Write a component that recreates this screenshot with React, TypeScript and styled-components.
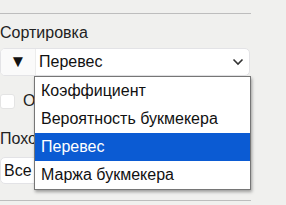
import styled, { createGlobalStyle } from "styled-components"

const GlobalStyle = createGlobalStyle`
    html, body {
        margin: 0;
        padding: 0;
        background-color: #f0f0ee;
        font-family: "Liberation Sans", Arial, sans-serif;
        overflow: hidden;
    }
`

const Panel = styled.div`
    position: relative;
    width: 251px;
    display: flex;
    flex-direction: column;
`

const Divider = styled.div<{ $top: number }>`
    height: 1px;
    margin-top: ${p => p.$top}px;
    background-color: #bdbdbd;
`

const Label = styled.div<{ $top: number }>`
    margin-top: ${p => p.$top}px;
    font-size: 16px;
    line-height: 18px;
    color: #222222;
    white-space: nowrap;
`

const SelectRow = styled.div`
    display: flex;
    height: 26px;
    margin-top: 6px;
    margin-right: 1px;
    border: 1px solid #e3e3e6;
    border-radius: 5px;
    background-color: #ffffff;
    overflow: hidden;
`

const OrderButton = styled.div`
    display: flex;
    justify-content: center;
    align-items: center;
    width: 34px;
    background-color: #fafafa;
    border-right: 1px solid #ececec;
    font-size: 17px;
    color: #111111;
`

const SelectBox = styled.div`
    display: flex;
    align-items: center;
    justify-content: space-between;
    flex: 1;
    padding: 0 5px 0 3px;
    font-size: 16px;
    color: #111111;
`

const SmallSelect = styled.div`
    display: flex;
    align-items: center;
    width: 60px;
    height: 25px;
    margin-top: 9px;
    padding-left: 3px;
    border: 1px solid #e3e3e6;
    border-radius: 5px;
    background-color: #ffffff;
    font-size: 16px;
    color: #111111;
`

const CheckRow = styled.div`
    display: flex;
    align-items: center;
    gap: 8px;
    margin-top: 16px;
    font-size: 16px;
    color: #222222;
    white-space: nowrap;
`

const CheckBox = styled.div`
    width: 13px;
    height: 13px;
    border: 1px solid #e4e4e4;
    border-radius: 3px;
    background-color: #ffffff;
`

const BlueButton = styled.div`
    height: 20px;
    margin-top: 9px;
    margin-right: 4px;
    border-radius: 4px;
    background-color: #243a7c;
`

const ListBox = styled.div`
    position: absolute;
    left: 34px;
    top: 76px;
    width: 215px;
    border: 1px solid #767676;
    background-color: #ffffff;
    box-shadow: 1px 2px 3px rgba(0, 0, 0, 0.35);
`

const Option = styled.div<{ $selected?: boolean }>`
    height: 28px;
    display: flex;
    align-items: center;
    padding-left: 6px;
    font-size: 16px;
    color: ${p => (p.$selected ? "#ffffff" : "#111111")};
    background-color: ${p => (p.$selected ? "#0b5bd3" : "transparent")};
    white-space: nowrap;
`

function Chevron() {
    return (
        <svg width="12" height="8" viewBox="0 0 12 8">
            <path d="M1.5 1.5 L6 6 L10.5 1.5" fill="none" stroke="#333" strokeWidth="1.6" />
        </svg>
    )
}

const options = ['Коэффициент', 'Вероятность букмекера', 'Перевес', 'Маржа букмекера']

export default function App() {
    return (
        <>
            <GlobalStyle />
            <Panel>
                <Divider $top={13} />
                <Label $top={10}>Сортировка</Label>
                <SelectRow>
                    <OrderButton>▼</OrderButton>
                    <SelectBox>
                        Перевес
                        <Chevron />
                    </SelectBox>
                </SelectRow>
                <CheckRow>
                    <CheckBox />
                    Отображать только
                </CheckRow>
                <Label $top={20}>Похожие</Label>
                <SmallSelect>Все</SmallSelect>
                <Divider $top={16} />
                <BlueButton />
                <ListBox>
                    {options.map(o => (
                        <Option key={o} $selected={o === 'Перевес'}>{o}</Option>
                    ))}
                </ListBox>
            </Panel>
        </>
    )
}
